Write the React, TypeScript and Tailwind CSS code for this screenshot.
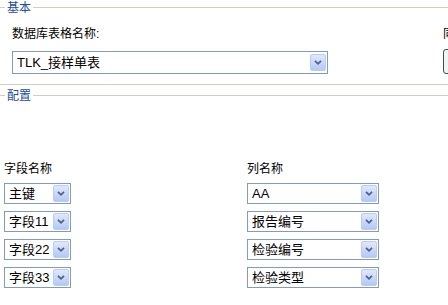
import React from 'react';

const font = "font-['Liberation_Sans','Noto_Sans_CJK_SC',sans-serif]";

function Chevron() {
  return (
    <svg width="8" height="5" viewBox="0 0 8 5" className="block">
      <path d="M1 0.8 L4 3.8 L7 0.8" fill="none" stroke="#4d6185" strokeWidth="1.7" />
    </svg>
  );
}

function Select({ value, className }: { value: string; className: string }) {
  return (
    <div className={`flex items-center border border-[#7f9db9] bg-white pl-[4px] pr-[1px] ${className}`}>
      <span className="flex-1 truncate text-[13px] leading-[15px] text-black">{value}</span>
      <span className="flex h-[17px] w-[16px] shrink-0 items-center justify-center rounded-[2px] border border-[#bccbf2] bg-gradient-to-b from-[#dfe8fe] to-[#b5c8f6]">
        <Chevron />
      </span>
    </div>
  );
}

function Legend({ title }: { title: string }) {
  return (
    <div className="flex h-[14px] items-center">
      <div className="h-px w-[5px] bg-[#d0d0bf]" />
      <span className="px-[2px] pt-[1px] text-[12px] leading-[14px] text-[#1c4d9e]">{title}</span>
      <div className="h-px flex-1 bg-[#d0d0bf]" />
    </div>
  );
}

const rows = [
  { field: '主键', column: 'AA' },
  { field: '字段11', column: '报告编号' },
  { field: '字段22', column: '检验编号' },
  { field: '字段33', column: '检验类型' },
];

export default function App() {
  return (
    <div className={`h-[305px] w-[448px] overflow-hidden bg-white ${font}`}>
      <Legend title="基本" />

      <div className="flex">
        <div className="ml-[12px] w-[316px] shrink-0">
          <p className="mt-[13px] text-[12px] leading-[14px] text-black">数据库表格名称:</p>
          <Select value="TLK_接样单表" className="mt-[10px] h-[23px]" />
        </div>
        <div className="ml-[115px] shrink-0">
          <p className="mt-[13px] text-[12px] leading-[14px] text-black">同步</p>
          <div className="mt-[8px] h-[25px] w-[30px] rounded-[3px] border border-[#3c4e63] bg-[#f4f4f0]" />
        </div>
      </div>

      <div className="mt-[10px] h-px bg-[#d0d0bf]" />
      <div className="mt-[3px]">
        <Legend title="配置" />
      </div>

      <div className="mt-[60px] flex pl-[4px]">
        <div className="w-[67px] shrink-0">
          <p className="text-[12px] leading-[14px] text-black">字段名称</p>
          <div className="mt-[7px] flex flex-col gap-[7px]">
            {rows.map((r) => (
              <Select key={r.field} value={r.field} className="h-[21px]" />
            ))}
          </div>
        </div>
        <div className="ml-[176px] w-[132px] shrink-0">
          <p className="text-[12px] leading-[14px] text-black">列名称</p>
          <div className="mt-[7px] flex flex-col gap-[7px]">
            {rows.map((r) => (
              <Select key={r.column} value={r.column} className="h-[21px]" />
            ))}
          </div>
        </div>
      </div>
    </div>
  );
}
